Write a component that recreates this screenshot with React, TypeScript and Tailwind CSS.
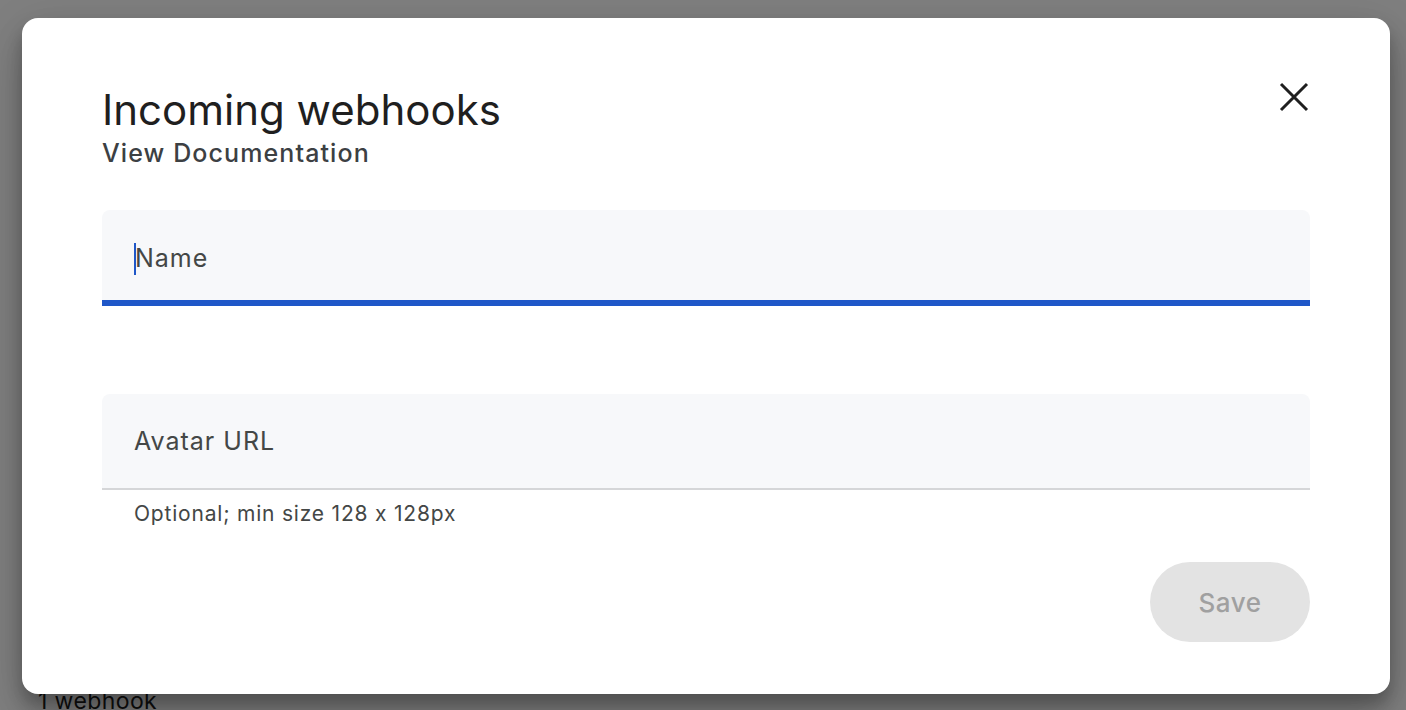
import React from "react";

const font = { fontFamily: "Inter, 'Open Sans', sans-serif" };

const CloseIcon = () => (
  <svg width="32" height="32" viewBox="0 0 32 32" fill="none">
    <path d="M3 3L29 29M29 3L3 29" stroke="#1f1f1f" strokeWidth="3" />
  </svg>
);

const App = () => {
  return (
    <div className="relative w-[1406px] h-[710px] overflow-hidden bg-white" style={font}>
      {/* page behind the dialog */}
      <div className="pt-[684px] pl-[38px] text-[23px] text-[#1f1f1f] tracking-[0.4px]">1 webhook</div>

      <div className="absolute inset-0 bg-black/50 pt-[18px] pl-[22px]">
        <div className="w-[1368px] h-[676px] bg-white rounded-[16px] shadow-[0_24px_38px_rgba(0,0,0,0.14),0_9px_46px_rgba(0,0,0,0.12),0_11px_15px_rgba(0,0,0,0.2)] px-[80px] pt-[66px]">
          <div className="flex justify-between items-start">
            <div>
              <h1 className="text-[42px] leading-[52px] text-[#1f1f1f]">Incoming webhooks</h1>
              <p className="text-[25px] leading-[30px] font-medium text-[#3c4043] mt-[2px] tracking-[1.1px]">View Documentation</p>
            </div>
            <button className="-mt-[3px]">
              <CloseIcon />
            </button>
          </div>

          <div className="mt-[42px] h-[96px] bg-[#f7f8fa] rounded-t-[8px] border-b-[6px] border-[#1f57c8] flex items-center px-[32px] pt-[8px]">
            <span className="w-[2px] h-[32px] bg-[#1f57c8] mr-[-1px]" />
            <span className="text-[25px] text-[#444746] tracking-[1px]">Name</span>
          </div>

          <div className="mt-[88px] h-[96px] bg-[#f7f8fa] rounded-t-[8px] border-b-2 border-[#d5d6d8] flex items-center px-[32px] pt-[2px]">
            <span className="text-[25px] text-[#444746] tracking-[1px]">Avatar URL</span>
          </div>
          <p className="mt-[10px] pl-[32px] text-[21px] leading-[28px] text-[#444746] tracking-[0.8px] [font-feature-settings:'calt'_0]">
            Optional; min size 128 x 128px
          </p>

          <div className="flex justify-end mt-[34px]">
            <button className="w-[160px] h-[80px] rounded-full bg-[#e3e3e3] text-[26px] font-medium text-[#a0a0a0] tracking-[0.5px]">
              Save
            </button>
          </div>
        </div>
      </div>
    </div>
  );
};

export default App;
